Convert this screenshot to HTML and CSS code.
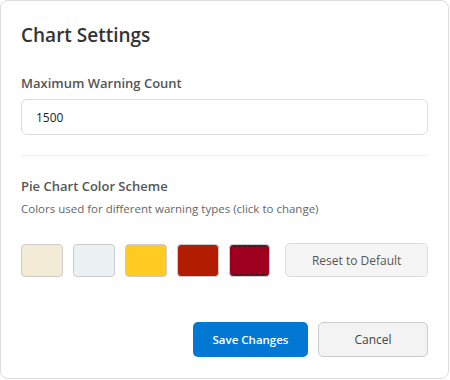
FILE: index.html
```html
<!DOCTYPE html>
<html lang="en">
<head>
    <meta charset="UTF-8">
    <meta name="viewport" content="width=device-width, initial-scale=1.0">
    <title>Chart Settings</title>
    <link rel="stylesheet" href="styles.css">
</head>
<body>
    <div class="dialog">
        <h2 class="dialog-title">Chart Settings</h2>

        <div class="field">
            <label class="field-label" for="maxCount">Maximum Warning Count</label>
            <input type="text" id="maxCount" class="text-input" value="1500">
        </div>

        <div class="divider"></div>

        <div class="field">
            <div class="field-label">Pie Chart Color Scheme</div>
            <div class="field-hint">Colors used for different warning types (click to change)</div>
            <div class="swatch-row">
                <button class="swatch" style="background: #f3ebd5"></button>
                <button class="swatch" style="background: #ecf1f4"></button>
                <button class="swatch" style="background: #ffca22"></button>
                <button class="swatch" style="background: #b21c00"></button>
                <button class="swatch focused" style="background: #a0001f"></button>
                <button class="btn btn-reset">Reset to Default</button>
            </div>
        </div>

        <div class="dialog-footer">
            <button class="btn btn-primary">Save Changes</button>
            <button class="btn btn-secondary">Cancel</button>
        </div>
    </div>
</body>
</html>
```

FILE: styles.css
```css
body {
    margin: 0;
    padding: 0;
    background: #ffffff;
    font-family: "Open Sans", "Noto Sans", sans-serif;
}

.dialog {
    box-sizing: border-box;
    width: 449px;
    height: 379px;
    padding: 22px 20px 20px 20px;
    border: 1px solid #dcdcdc;
    border-radius: 8px;
    background: #ffffff;
}

.dialog-title {
    margin: 0;
    font-size: 19px;
    line-height: 24px;
    font-weight: 600;
    color: #333333;
}

.field-label {
    display: block;
    font-size: 13px;
    line-height: 18px;
    font-weight: 600;
    color: #555555;
}

.dialog-title + .field {
    margin-top: 27px;
}

.text-input {
    display: block;
    box-sizing: border-box;
    width: 100%;
    height: 36px;
    margin-top: 7px;
    padding: 0 14px;
    border: 1px solid #dddddd;
    border-radius: 6px;
    font-family: inherit;
    font-size: 12px;
    color: #222222;
    outline: none;
}

.divider {
    height: 1px;
    margin: 20px 0 21px 0;
    background: #eeeeee;
}

.field-hint {
    margin-top: 6px;
    font-size: 11.5px;
    line-height: 16px;
    color: #666666;
}

.swatch-row {
    display: flex;
    align-items: center;
    gap: 10px;
    margin-top: 26px;
}

.swatch {
    box-sizing: border-box;
    width: 42px;
    height: 33px;
    padding: 0;
    border: 1px solid #cccccc;
    border-radius: 4px;
    cursor: pointer;
}

.swatch.focused {
    outline: 1px dashed #222222;
    outline-offset: -3px;
}

.btn {
    box-sizing: border-box;
    height: 35px;
    border-radius: 5px;
    font-family: inherit;
    font-size: 12px;
    cursor: pointer;
}

.btn-reset {
    width: 143px;
    height: 34px;
    margin-left: 5px;
    border: 1px solid #dddddd;
    background: #f5f5f5;
    color: #555555;
}

.dialog-footer {
    display: flex;
    justify-content: flex-end;
    gap: 10px;
    margin-top: 45px;
}

.btn-primary {
    width: 115px;
    border: none;
    background: #0078d4;
    color: #ffffff;
    font-weight: 600;
    font-size: 11.5px;
}

.btn-secondary {
    width: 110px;
    border: 1px solid #cccccc;
    background: #f3f3f3;
    color: #444444;
}
```
